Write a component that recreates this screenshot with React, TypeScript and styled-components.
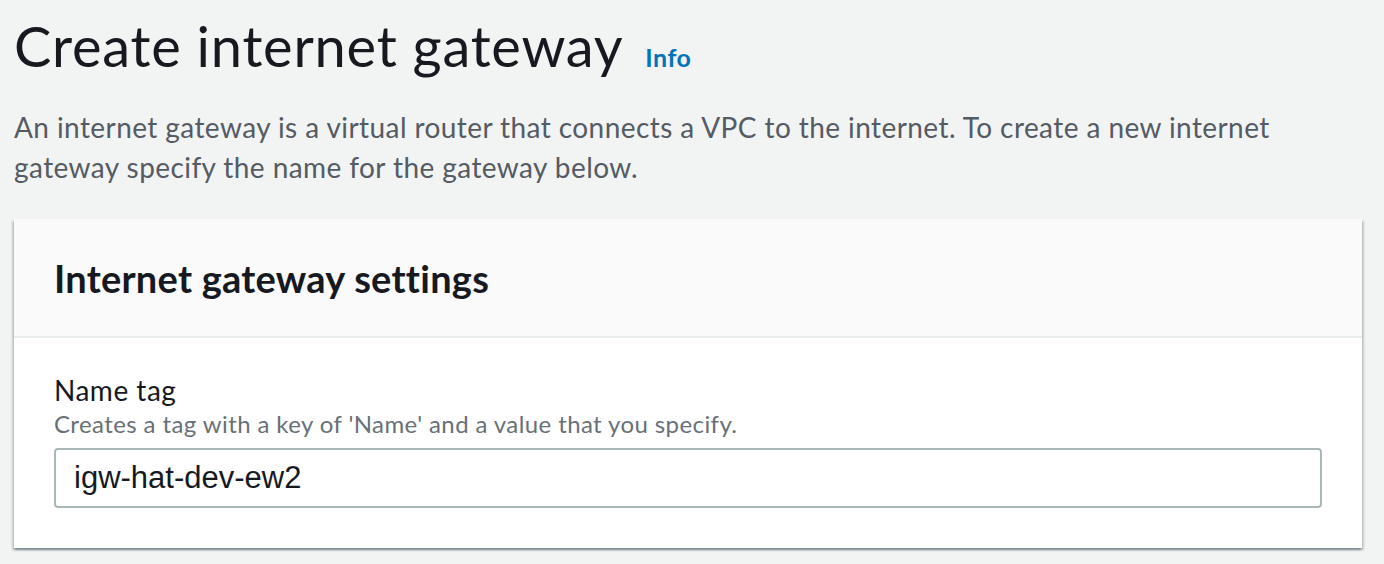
import styled, { createGlobalStyle } from "styled-components";

const GlobalStyle = createGlobalStyle`
  html, body {
    margin: 0;
    padding: 0;
    background: #f2f3f3;
  }
  body {
    font-family: Lato, "Open Sans", sans-serif;
    color: #16191f;
  }
`;

const Page = styled.div`
  width: 1384px;
  height: 564px;
  box-sizing: border-box;
  padding: 14px 22px 0 14px;
  overflow: hidden;
`;

const TitleRow = styled.div`
  display: flex;
  align-items: baseline;
  gap: 22px;
`;

const Title = styled.h1`
  margin: 0;
  font-size: 56px;
  line-height: 64px;
  font-weight: 400;
  letter-spacing: 0.75px;
  color: #16191f;
`;

const InfoLink = styled.a`
  font-size: 25px;
  font-weight: 700;
  letter-spacing: 0.5px;
  color: #0073bb;
  text-decoration: none;
`;

const Description = styled.p`
  margin: 29px 0 0;
  font-size: 28px;
  line-height: 40px;
  letter-spacing: 0.42px;
  color: #545b64;
`;

const Card = styled.section`
  margin-top: 32px;
  background: #ffffff;
  box-shadow: 0 2px 2px 0 rgba(0, 28, 36, 0.3),
    2px 2px 2px 0 rgba(0, 28, 36, 0.15),
    -2px 2px 2px 0 rgba(0, 28, 36, 0.15);
`;

const CardHeader = styled.div`
  height: 119px;
  box-sizing: border-box;
  display: flex;
  align-items: center;
  padding: 0 40px;
  background: #fafafa;
  border-bottom: 2px solid #eaeded;
`;

const CardTitle = styled.h2`
  margin: 0;
  font-size: 38px;
  line-height: 44px;
  font-weight: 700;
  letter-spacing: 0.25px;
  color: #16191f;
`;

const CardBody = styled.div`
  padding: 34px 40px 40px;
`;

const Field = styled.div`
  display: flex;
  flex-direction: column;
`;

const Label = styled.label`
  font-size: 28px;
  line-height: 36px;
  letter-spacing: 0.5px;
  color: #16191f;
`;

const Hint = styled.span`
  font-size: 24px;
  line-height: 32px;
  letter-spacing: 0.4px;
  color: #687078;
`;

const Input = styled.input`
  margin-top: 8px;
  height: 60px;
  box-sizing: border-box;
  border: 2px solid #aab7b8;
  border-radius: 4px;
  padding: 0 18px;
  font-family: "Liberation Sans", Arial, sans-serif;
  font-size: 31px;
  color: #16191f;
  background: #ffffff;
  outline: none;
`;

export default function App() {
  return (
    <>
      <GlobalStyle />
      <Page>
        <TitleRow>
          <Title>Create internet gateway</Title>
          <InfoLink href="#">Info</InfoLink>
        </TitleRow>
        <Description>
          An internet gateway is a virtual router that connects a VPC to the internet. To create a new internet
          gateway specify the name for the gateway below.
        </Description>
        <Card>
          <CardHeader>
            <CardTitle>Internet gateway settings</CardTitle>
          </CardHeader>
          <CardBody>
            <Field>
              <Label>Name tag</Label>
              <Hint>Creates a tag with a key of 'Name' and a value that you specify.</Hint>
              <Input defaultValue="igw-hat-dev-ew2" />
            </Field>
          </CardBody>
        </Card>
      </Page>
    </>
  );
}
